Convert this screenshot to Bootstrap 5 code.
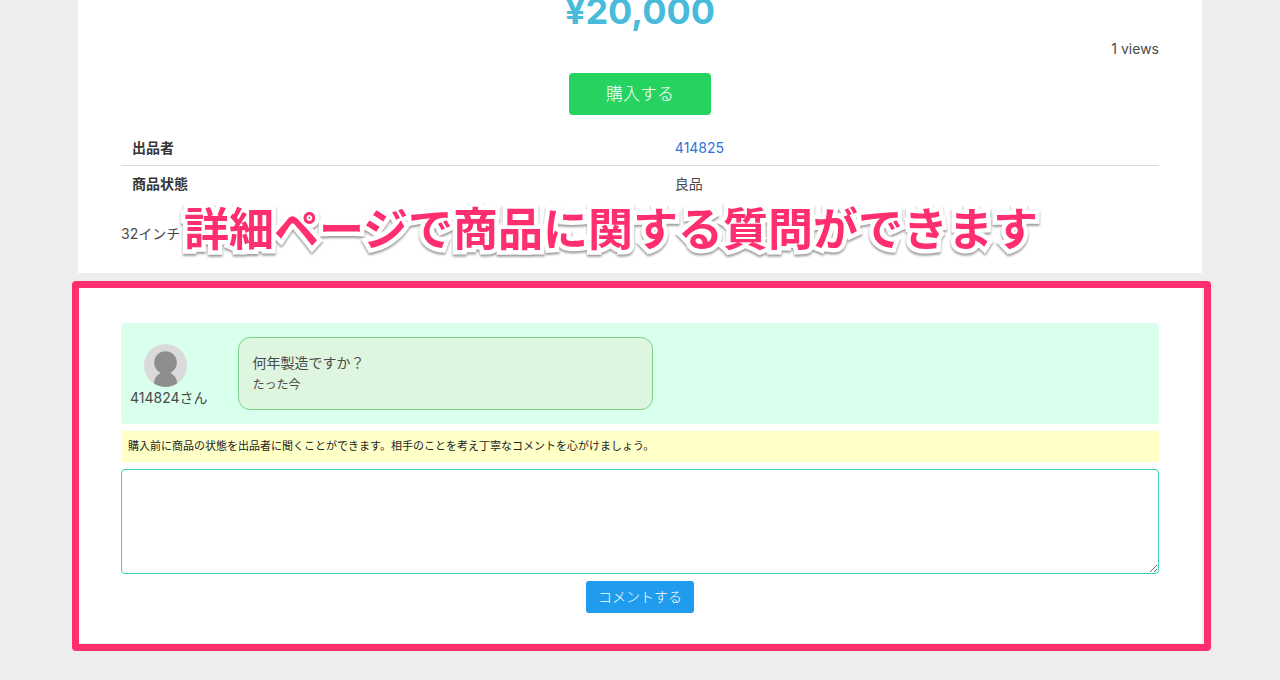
<!DOCTYPE html>
<html lang="ja">
<head>
<meta charset="utf-8">
<meta name="viewport" content="width=device-width, initial-scale=1">
<title>商品詳細</title>
<link href="https://cdn.jsdelivr.net/npm/bootstrap@5.3.0/dist/css/bootstrap.min.css" rel="stylesheet">
<style>
  body { background: #ededed; color: #4a4a4a; font: 14px/21px Inter, "Noto Sans CJK JP", sans-serif; }
  .page-wrap { padding: 0 78px 36px; }
  .panel { background: #fff; padding-left: 43px; padding-right: 43px; }
  .item-panel { padding-bottom: 29px; }
  .price { color: #48bbdb; font-size: 36px; line-height: 22px; font-weight: 700; padding-bottom: 16px; margin: 0; }
  .buy-area { padding: 14px 0 15px; }
  .buy-btn { background: #26d361; color: #fff; font-size: 17px; font-weight: 300; line-height: 26px; padding: 8px 37px; border: 0; border-radius: 4px; }
  .buy-btn:hover { background: #20bd55; color: #fff; }
  .spec { --bs-table-bg: transparent; color: inherit; table-layout: fixed; }
  .spec > tbody > tr > * { padding: 7px 11px; color: inherit; border-bottom: 1px solid #dbdbdb; }
  .spec > tbody > tr:last-child > * { border-bottom: 0; }
  .spec > tbody > tr > th { color: #363636; width: 52.3%; }
  .spec a { color: #3273dc; }
  .description { margin: 22px 0 0; }
  .callout-title { position: absolute; left: 106px; bottom: 13px; margin: 0; white-space: nowrap; font-size: 45px; line-height: 60px; font-weight: 700; color: #ff2e6e; -webkit-text-stroke: 9px #fff; stroke-linejoin: round; paint-order: stroke fill; filter: drop-shadow(0 2px 1px rgba(0,0,0,.4)); z-index: 2; }
  .qa-panel { margin-top: 15px; padding-top: 35px; padding-bottom: 30px; }
  .qa-frame { position: absolute; inset: -7px -9px -8px -6px; border: 7px solid #ff2e6e; border-radius: 4px; pointer-events: none; }
  .thread { background: #d9ffed; border-radius: 4px; padding: 14px 0; gap: 30px; }
  .poster { padding: 7px 0 0 9px; }
  .avatar { width: 43px; height: 43px; display: block; margin-left: 14px; }
  .bubble { width: 40%; background: #def5df; border: 1px solid #7bd389; border-radius: 12px; padding: 14px; }
  .bubble small { font-size: 12px; display: block; margin-top: 1px; }
  .notice { background: #ffffc8; color: #222; font-size: 11px; line-height: 17px; padding: 7px; margin: 7px 0; }
  .comment-box { height: 105px; border: 1px solid #36d3b8; border-radius: 4px; resize: vertical; font-size: 14px; margin-bottom: 7px; }
  .send-btn { background: #209cee; color: #fff; font-size: 14px; font-weight: 300; line-height: 22px; padding: 5px 12px; border: 0; border-radius: 3px; }
  .send-btn:hover { background: #1a8ad4; color: #fff; }
</style>
</head>
<body>
<main class="page-wrap">
  <section class="panel item-panel position-relative">
    <p class="price text-center">¥20,000</p>
    <div class="text-end">1 views</div>
    <div class="buy-area d-flex justify-content-center"><button type="button" class="btn buy-btn">購入する</button></div>
    <table class="table spec mb-0">
      <tbody>
        <tr><th scope="row">出品者</th><td><a href="#" class="text-decoration-none">414825</a></td></tr>
        <tr><th scope="row">商品状態</th><td>良品</td></tr>
      </tbody>
    </table>
    <p class="description">32インチ</p>
    <h1 class="callout-title">詳細ページで商品に関する質問ができます</h1>
  </section>

  <section class="panel qa-panel position-relative">
    <div class="qa-frame"></div>
    <div class="thread d-flex align-items-start">
      <div class="poster">
        <svg class="avatar" viewBox="0 0 43 43" aria-hidden="true">
          <defs><clipPath id="disc"><circle cx="21.500" cy="21.500" r="21.500"/></clipPath></defs>
          <circle cx="21.500" cy="21.500" r="21.500" fill="#dadada"/>
          <g fill="#8e8e8e" clip-path="url(#disc)">
            <circle cx="21.500" cy="18.500" r="11.300"/>
            <path d="M16 26 C17 28 17 29 15 30 C12 32 10 35 10 39 V43 H33 V39 C33 35 31 32 28 30 C26 29 26 28 27 26 Z"/>
          </g>
        </svg>
        <div>414824さん</div>
      </div>
      <div class="bubble">
        <div>何年製造ですか？</div>
        <small>たった今</small>
      </div>
    </div>
    <p class="notice">購入前に商品の状態を出品者に聞くことができます。相手のことを考え丁寧なコメントを心がけましょう。</p>
    <form>
      <textarea class="form-control comment-box" aria-label="コメント"></textarea>
      <button type="button" class="btn send-btn d-block mx-auto">コメントする</button>
    </form>
  </section>
</main>
<script src="https://cdn.jsdelivr.net/npm/bootstrap@5.3.0/dist/js/bootstrap.bundle.min.js"></script>
</body>
</html>
